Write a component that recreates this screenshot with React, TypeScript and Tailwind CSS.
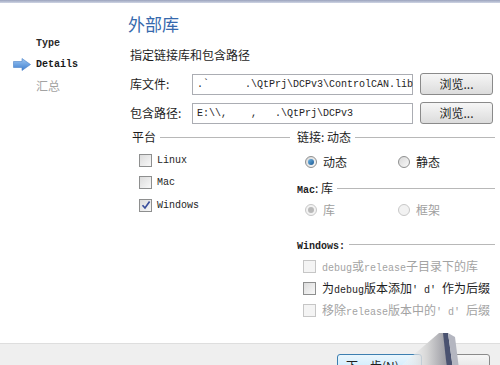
import React from "react";

const cjk = "font-['Noto_Sans_CJK_SC','Noto_Sans',sans-serif]";
const mono = "font-['Liberation_Mono','Noto_Sans_CJK_SC',monospace]";

function M({ children }: { children: React.ReactNode }) {
  return <span className={`${mono} text-[10px]`}>{children}</span>;
}

function Check({ checked, disabled }: { checked?: boolean; disabled?: boolean }) {
  return (
    <span
      className={`relative flex h-[13px] w-[13px] shrink-0 items-center justify-center border ${
        disabled ? "border-[#c6c6c6] bg-[#f4f4f4]" : "border-[#8e8f8f] bg-gradient-to-br from-[#dcdcdc] to-[#f8f8f8]"
      }`}
    >
      {checked && (
        <svg width="10" height="10" viewBox="0 0 10 10">
          <path d="M1.5 5.2 L4 8 L8.6 1.6" fill="none" stroke="#3a4f9c" strokeWidth="1.7" />
        </svg>
      )}
    </span>
  );
}

function Radio({ on, disabled }: { on?: boolean; disabled?: boolean }) {
  return (
    <span
      className={`flex h-[12px] w-[12px] shrink-0 items-center justify-center rounded-full border ${
        disabled ? "border-[#c8c8c8] bg-[#f2f2f2]" : "border-[#8e8f8f] bg-gradient-to-br from-[#d8d8d8] to-[#f9f9f9]"
      }`}
    >
      {on && (
        <span
          className={`h-[6px] w-[6px] rounded-full ${
            disabled ? "bg-[#b9b9b9]" : "bg-gradient-to-br from-[#6fb6e6] to-[#1c5a92]"
          }`}
        />
      )}
    </span>
  );
}

function GroupHead({ children, className = "" }: { children: React.ReactNode; className?: string }) {
  return (
    <div className={`flex h-[16px] items-center gap-[4px] ${className}`}>
      <span className="whitespace-nowrap text-[12px] text-[#1e1e1e]">{children}</span>
      <span className="h-px flex-1 bg-[#b8b8b8]" />
    </div>
  );
}

function Browse() {
  return (
    <button className="flex h-[22px] w-[73px] items-center justify-center rounded-[3px] border border-[#8a8a8a] bg-gradient-to-b from-[#f6f6f6] to-[#dcdcdc] text-[12px] text-[#1e1e1e]">
      浏览...
    </button>
  );
}

export default function App() {
  return (
    <div className={`${cjk} flex h-[365px] w-[500px] flex-col overflow-hidden bg-white text-[#1e1e1e]`}>
      <div className="h-[3px] bg-gradient-to-b from-[#9ba3bd] to-[#cfd5e4]" />
      <div className="flex flex-1">
        <div className="w-[128px] pt-[30px]">
          <div className="flex h-[21px] items-center pl-[36px]">
            <span className={`${mono} text-[10px] font-bold text-[#2a2a2a]`}>Type</span>
          </div>
          <div className="flex h-[21px] items-center pl-[13px]">
            <svg width="18" height="13" viewBox="0 0 18 13" className="mr-[5px]">
              <defs>
                <linearGradient id="ar" x1="0" y1="0" x2="0" y2="1">
                  <stop offset="0" stopColor="#9cc6f2" />
                  <stop offset="1" stopColor="#3f7fd0" />
                </linearGradient>
              </defs>
              <polygon points="0.5,3.5 9,3.5 9,0.5 17.5,6.5 9,12.5 9,9.5 0.5,9.5" fill="url(#ar)" stroke="#4a82c8" strokeWidth="0.6" />
            </svg>
            <span className={`${mono} text-[10px] font-bold text-[#1a1a1a]`}>Details</span>
          </div>
          <div className="flex h-[22px] items-center pl-[36px] text-[12px] text-[#a3a3a3]">汇总</div>
        </div>

        <div className="flex flex-1 flex-col pt-[10px]">
          <div className="flex h-[20px] items-center text-[17px] leading-none text-[#3669ad]">外部库</div>
          <div className="mt-[14px] flex h-[16px] items-center pl-[2px] text-[12px]">指定链接库和包含路径</div>

          <div className="mt-[10px] flex h-[22px] items-center">
            <span className="w-[64px] pl-[2px] text-[12px]">库文件:</span>
            <div className={`${mono} flex h-[21px] w-[221px] items-center whitespace-pre border border-[#abadb3] pl-[4px] text-[10px]`}>
              {".`      .\\QtPrj\\DCPv3\\ControlCAN.lib"}
            </div>
            <div className="ml-[7px]">
              <Browse />
            </div>
          </div>

          <div className="mt-[7px] flex h-[22px] items-center">
            <span className="w-[64px] pl-[2px] text-[12px]">包含路径:</span>
            <div className={`${mono} flex h-[21px] w-[221px] items-center whitespace-pre border border-[#abadb3] pl-[4px] text-[10px]`}>
              {"E:\\\\,    ,   .\\QtPrj\\DCPv3"}
            </div>
            <div className="ml-[7px]">
              <Browse />
            </div>
          </div>

          <div className="mt-[5px] flex">
            <div className="w-[162px] pl-[4px]">
              <GroupHead>平台</GroupHead>
              <div className="mt-[4px] flex flex-col pl-[7px]">
                {[
                  ["Linux", false],
                  ["Mac", false],
                  ["Windows", true],
                ].map(([label, c]) => (
                  <div key={label as string} className="flex h-[22.5px] items-center gap-[5px]">
                    <Check checked={c as boolean} />
                    <M>{label as string}</M>
                  </div>
                ))}
              </div>
            </div>

            <div className="ml-[7px] flex-1 pr-[5px]">
              <GroupHead>链接: 动态</GroupHead>
              <div className="mt-[6px] flex h-[22px] items-center pl-[8px] text-[12px]">
                <div className="flex w-[93px] items-center gap-[6px]">
                  <Radio on />
                  <span>动态</span>
                </div>
                <div className="flex items-center gap-[6px]">
                  <Radio />
                  <span>静态</span>
                </div>
              </div>

              <GroupHead className="mt-[7px]">
                <span className={`${mono} text-[10px] font-bold`}>Mac</span>: 库
              </GroupHead>
              <div className="mt-[3px] flex h-[22px] items-center pl-[8px] text-[12px] text-[#a0a0a0]">
                <div className="flex w-[93px] items-center gap-[6px]">
                  <Radio on disabled />
                  <span>库</span>
                </div>
                <div className="flex items-center gap-[6px]">
                  <Radio disabled />
                  <span>框架</span>
                </div>
              </div>

              <GroupHead className="mt-[15px]">
                <span className={`${mono} text-[10px] font-bold`}>Windows:</span>
              </GroupHead>
              <div className="mt-[3px] flex flex-col pl-[6px] text-[12px]">
                <div className="flex h-[22px] items-center gap-[6px] text-[#a3a3a3]">
                  <Check disabled />
                  <span className="whitespace-nowrap">
                    <M>debug</M>或<M>release</M>子目录下的库
                  </span>
                </div>
                <div className="flex h-[22px] items-center gap-[6px]">
                  <Check />
                  <span className="whitespace-nowrap">
                    为<M>debug</M>版本添加<M>' d' </M>作为后缀
                  </span>
                </div>
                <div className="flex h-[23px] items-center gap-[6px] text-[#a3a3a3]">
                  <Check disabled />
                  <span className="whitespace-nowrap">
                    移除<M>release</M>版本中的<M>' d' </M>后缀
                  </span>
                </div>
              </div>
            </div>
          </div>
        </div>
      </div>

      <div className="relative flex h-[22px] items-start justify-end gap-[8px] border-t border-[#dedede] bg-[#efefef] pt-[10px] pr-[10px]">
        <button className="h-[24px] w-[85px] rounded-[3px] border border-[#3c7fb1] bg-gradient-to-b from-[#eaf6fd] to-[#bee6fd] pl-[8px] text-left text-[12px] text-[#1e1e1e]">
          下一步(N)
        </button>
        <button className="h-[24px] w-[60px] rounded-[3px] border border-[#8a8a8a] bg-gradient-to-b from-[#f6f6f6] to-[#dcdcdc]" />
        <svg className="absolute left-[385px] top-[-45px]" width="80" height="70" viewBox="0 0 80 70">
          <defs>
            <linearGradient id="blob" x1="0" y1="0" x2="1" y2="0">
              <stop offset="0" stopColor="#ffffff" stopOpacity="0.1" />
              <stop offset="0.6" stopColor="#d6d6d6" />
              <stop offset="1" stopColor="#9a9aa2" />
            </linearGradient>
          </defs>
          <rect x="14" y="24" width="40" height="12" fill="#ffffff" />
          <polygon points="12,70 54,34 60,34 62,70" fill="url(#blob)" />
          <polygon points="58,34 63,34 68,70 62,70" fill="#4a5270" />
          <polygon points="63,34 70,38 74,70 68,70" fill="#b4b6c0" />
        </svg>
      </div>
    </div>
  );
}
